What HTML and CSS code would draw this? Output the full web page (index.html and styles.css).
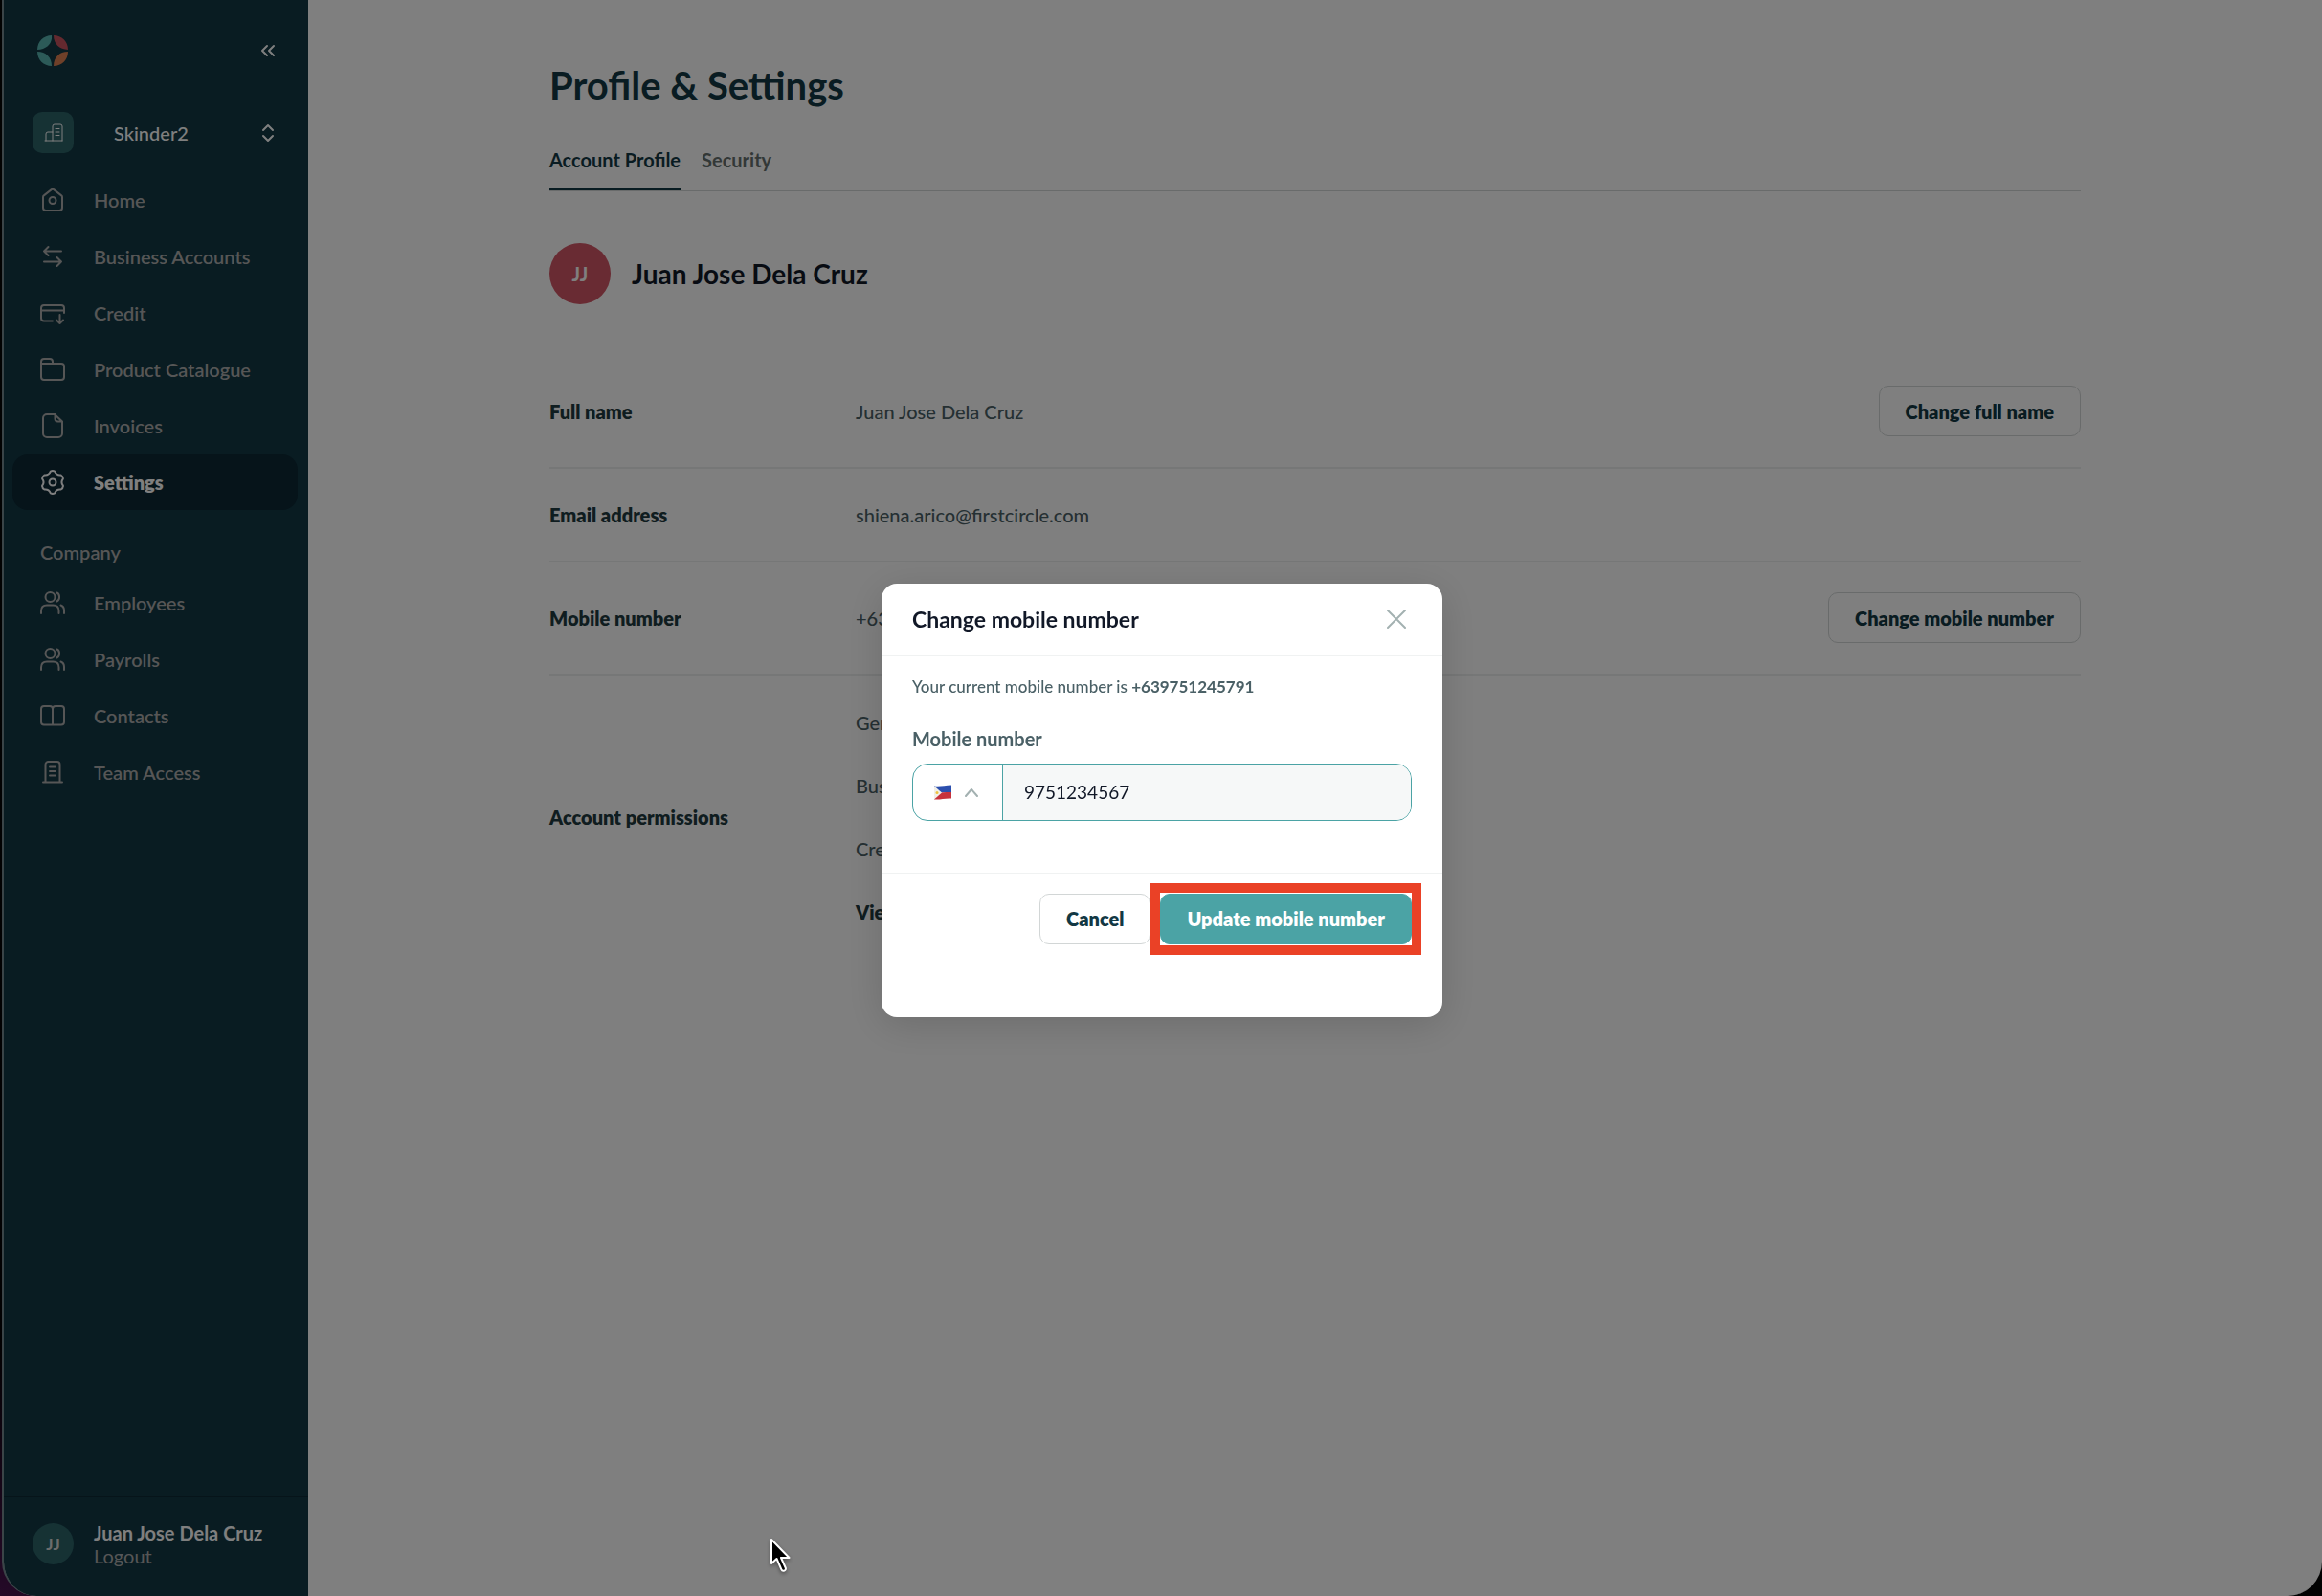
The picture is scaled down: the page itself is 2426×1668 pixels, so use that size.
FILE: index.html
```html
<!DOCTYPE html>
<html lang="en">
<head>
<meta charset="utf-8">
<meta name="viewport" content="width=device-width, initial-scale=1">
<title>Profile &amp; Settings</title>
<link rel="stylesheet" href="styles.css">
</head>
<body>
<svg class="sprite" aria-hidden="true">
  <symbol id="users" viewBox="0 0 28 28"><circle cx="11.500" cy="8" r="5"/><path d="M2 25v-2.500c0-4 2.500-6 6-6h6.500c3.500 0 6 2 6 6V25M18.500 3.500c3.400 1.500 3.400 7.500 0 9M22.500 16.500c2.300.8 3.500 2.800 3.500 5.500v3"/></symbol>
</svg>
<div class="app">
  <aside class="sidebar">
    <div class="brand">
      <svg class="logo" viewBox="0 0 32 32" aria-label="First Circle" role="img">
        <path fill="#58b5b1" d="M15 0v3.500C14 10 9 14.500 0 15 0 6.500 6.500 0 15 0z"/>
        <path fill="#c9525e" d="M17 0c8.500 0 15 6.500 15 15C23 14.500 17 9 17 0z"/>
        <path fill="#58b5b1" d="M0 17c9 0 15 6 15 15C6.500 32 0 25.500 0 17z"/>
        <path fill="#df8052" d="M32 17c0 8.500-6.500 15-15 15 0-9 6-15 15-15z"/>
      </svg>
      <button class="icon-button" aria-label="Collapse menu"><svg viewBox="0 0 16 16"><path d="M7 3 2 8l5 5M14 3 9 8l5 5"/></svg></button>
    </div>
    <button class="org">
      <span class="org-badge"><svg viewBox="0 0 20 20"><path d="M1 18h18M2 18v-7a2 2 0 0 1 2-2h5M9 18V3a2 2 0 0 1 2-2h6a2 2 0 0 1 2 2v15M12 5.500h4M12 9h4M12 12.500h4"/></svg></span>
      <span class="org-name">Skinder2</span>
      <svg class="org-arrows" viewBox="0 0 16 20"><path d="m3 7 5-5 5 5M3 13l5 5 5-5"/></svg>
    </button>
    <nav class="nav" aria-label="Main">
      <a href="#home"><svg viewBox="0 0 28 28"><path d="M4 11a2 2 0 0 1 .8-1.600l8-6.300a2 2 0 0 1 2.400 0l8 6.300a2 2 0 0 1 .8 1.600V22a3 3 0 0 1-3 3H7a3 3 0 0 1-3-3z"/><circle cx="14" cy="14.500" r="3.500"/></svg>Home</a>
      <a href="#accounts"><svg viewBox="0 0 28 28"><path d="M23 8.500H5M9.500 4 5 8.500 9.500 13M5 19.500h18M18.500 15l4.500 4.500-4.500 4.500"/></svg>Business Accounts</a>
      <a href="#credit"><svg viewBox="0 0 28 28"><path d="M14 22.500H5a3 3 0 0 1-3-3V9a3 3 0 0 1 3-3h18a3 3 0 0 1 3 3v5M2 11.500h24M21.500 16v9M18 21.500l3.500 3.500 3.500-3.500"/></svg>Credit</a>
      <a href="#catalogue"><svg viewBox="0 0 28 28"><path d="M2 22V6a3 3 0 0 1 3-3h6a3 3 0 0 1 3 3v2h9a3 3 0 0 1 3 3v11a3 3 0 0 1-3 3H5a3 3 0 0 1-3-3zM2 8h12"/></svg>Product Catalogue</a>
      <a href="#invoices"><svg viewBox="0 0 28 28"><path d="M16 2H8a4 4 0 0 0-4 4v16a4 4 0 0 0 4 4h12a4 4 0 0 0 4-4V9.500zM16.500 2v4.500a3 3 0 0 0 3 3H24"/></svg>Invoices</a>
      <a href="#settings" class="active" aria-current="page"><svg viewBox="-14 -14 28 28"><path d="M-2.200-11.300Q0-12.500 2.200-11.300 4-6.900 8.700-7.500 10.900-6.200 10.900-3.700 8 0 10.900 3.700 10.900 6.200 8.700 7.500 4 6.900 2.200 11.300 0 12.500-2.200 11.300-4 6.900-8.700 7.500-10.900 6.200-10.900 3.700-8 0-10.900-3.700-10.900-6.200-8.700-7.500-4-6.900-2.200-11.300z"/><circle r="3.500"/></svg>Settings</a>
    </nav>
    <h2 class="nav-title">Company</h2>
    <nav class="nav" aria-label="Company">
      <a href="#employees"><svg><use href="#users"/></svg>Employees</a>
      <a href="#payrolls"><svg><use href="#users"/></svg>Payrolls</a>
      <a href="#contacts"><svg viewBox="0 0 28 28"><path d="M14 7a3 3 0 0 0-3-3H5a3 3 0 0 0-3 3v13.500a3 3 0 0 0 3 3h18a3 3 0 0 0 3-3V7a3 3 0 0 0-3-3h-6a3 3 0 0 0-3 3zV23.500"/></svg>Contacts</a>
      <a href="#team"><svg viewBox="0 0 28 28"><path d="M4 24.500h20M6.500 24.500V6a3 3 0 0 1 3-3h9a3 3 0 0 1 3 3v18.500M11 8.500h6M11 13h6M11 17.500h6"/></svg>Team Access</a>
    </nav>
    <div class="user">
      <span class="user-avatar">JJ</span>
      <div><strong>Juan Jose Dela Cruz</strong><a href="#logout">Logout</a></div>
    </div>
  </aside>
  <main class="main">
    <div class="content">
      <h1>Profile &amp; Settings</h1>
      <nav class="tabs" aria-label="Settings sections">
        <a href="#profile" class="active" aria-current="page">Account Profile</a>
        <a href="#security">Security</a>
      </nav>
      <header class="profile">
        <span class="avatar">JJ</span>
        <h2>Juan Jose Dela Cruz</h2>
      </header>
      <dl class="rows">
        <div class="row thick"><dt>Full name</dt><dd><span>Juan Jose Dela Cruz</span><button class="button">Change full name</button></dd></div>
        <div class="row"><dt>Email address</dt><dd>shiena.arico@firstcircle.com</dd></div>
        <div class="row thick"><dt>Mobile number</dt><dd><span>+63</span><button class="button">Change mobile number</button></dd></div>
        <div class="row permissions"><dt>Account permissions</dt><dd><span>General</span><span>Business</span><span>Credit</span><a href="#permissions">View</a></dd></div>
      </dl>
    </div>
  </main>
</div>
<div class="overlay">
  <section class="modal" role="dialog" aria-modal="true" aria-labelledby="modal-title">
    <header class="modal-header">
      <h2 id="modal-title">Change mobile number</h2>
      <button class="close" aria-label="Close"><svg viewBox="0 0 20 20"><path d="m1 1 18 18M19 1 1 19"/></svg></button>
    </header>
    <form class="modal-form">
      <div class="modal-body">
        <p>Your current mobile number is <strong>+639751245791</strong></p>
        <label for="mobile">Mobile number</label>
        <div class="phone">
          <button type="button" class="country" aria-label="Country: Philippines" aria-haspopup="listbox">
            <svg class="flag" viewBox="0 0 18 16">
              <path fill="#2c4fae" d="M0 1.500c6 1 11-1 18-1V8c-6-.5-11 1-18 .5z"/>
              <path fill="#c8323c" d="M0 8.500C7 9 12 7.500 18 8v6.500c-7-.5-11 1.500-18 1z"/>
              <path fill="#f1efe8" d="M0 1.500l8 7-8 7z"/><circle cx="3" cy="8.500" r="1.500" fill="#eec341"/>
            </svg>
            <svg class="caret" viewBox="0 0 14 10"><path d="m1 9 6-7 6 7"/></svg>
          </button>
          <input id="mobile" type="tel" value="9751234567">
        </div>
      </div>
      <footer class="modal-footer">
        <button type="button" class="button">Cancel</button>
        <span class="highlight"><button type="button" class="button primary">Update mobile number</button></span>
      </footer>
    </form>
  </section>
</div>
<svg class="cursor" viewBox="0 0 24 38" aria-hidden="true"><path d="M2 2v25l5.500-5 4.800 11.200c1.300 3 5.600 1.200 4.400-1.700L12 21h8.500z"/></svg>
</body>
</html>
```
FILE: styles.css
```css
:root {
  --ink: #123844;
  --slate: #4a6066;
  --muted: #adadad;
  --teal: #4ba3a5;
  --line: #d2d6d6;
}

* { box-sizing: border-box; }

body {
  margin: 0;
  background: linear-gradient(to top right, #4a1450, #050305 8%, #020604);
  font: 400 20px/24px Lato, "Liberation Sans", sans-serif;
  color: var(--slate);
}

h1, h2, p, dl, dd { margin: 0; }
a { color: inherit; text-decoration: none; }
button { margin: 0; padding: 0; border: 0; background: none; color: inherit; font: inherit; cursor: pointer; }
svg { flex: none; fill: none; stroke: currentColor; stroke-width: 2; stroke-linecap: round; stroke-linejoin: round; }
.sprite { position: absolute; width: 0; height: 0; }

.app {
  display: flex;
  min-height: 100vh;
  margin: 0 0 0 2px;
  border-left: 2px solid #75898f;
  border-right: 2px solid #fff;
  border-radius: 0 0 36px 36px;
  background: #fff;
  overflow: hidden;
}

/* Sidebar */
.sidebar {
  display: flex;
  flex: none;
  flex-direction: column;
  width: 318px;
  background: var(--ink);
  color: var(--muted);
}
.brand { display: flex; align-items: center; justify-content: space-between; padding: 37px 34px 0 35px; }
.logo { width: 32px; height: 32px; stroke: none; }
.icon-button { display: flex; color: #fff; }
.icon-button svg { width: 16px; height: 16px; }
.org { display: flex; align-items: center; margin: 48px 34px 0 30px; color: #fff; text-align: left; }
.org-badge { display: flex; align-items: center; justify-content: center; width: 43px; height: 43px; border-radius: 10px; background: #2c6469; }
.org-badge svg { width: 20px; height: 20px; stroke-width: 1; }
.org-name { flex: 1; padding-left: 42px; font-weight: 500; }
.org-arrows { width: 16px; height: 20px; }
.nav { display: flex; flex-direction: column; gap: 1px; padding: 0 11px 0 9px; }
.org + .nav { margin-top: 20px; }
.nav a { display: flex; align-items: center; gap: 29px; height: 58px; padding-left: 28px; border-radius: 16px; font-weight: 600; }
.nav svg { width: 28px; height: 28px; }
.nav .active { background: #0c2834; color: #fff; font-weight: 800; }
.nav-title { margin: 32px 0 12px 38px; font-size: 20px; font-weight: 600; }
.user { display: flex; align-items: center; gap: 21px; height: 104px; margin-top: auto; padding: 0 30px 6px; border-top: 1px solid #0c2834; }
.user-avatar { display: flex; align-items: center; justify-content: center; width: 43px; height: 43px; border-radius: 50%; background: #2c6469; color: #d8d8d8; font-size: 17px; font-weight: 700; }
.user strong { display: block; color: #fff; }

/* Page */
.main { flex: 1; padding: 65px 32px 32px 34px; }
.content { max-width: 1600px; margin: 0 auto; }
h1 { color: var(--ink); font-size: 40px; font-weight: 700; line-height: 48px; }
.tabs { display: flex; gap: 22px; margin-top: 42px; border-bottom: 1px solid var(--line); font-weight: 700; }
.tabs a { padding-bottom: 18px; border-bottom: 2px solid transparent; color: #67716f; }
.tabs .active { border-color: var(--ink); color: var(--ink); }
.profile { display: flex; align-items: center; gap: 22px; margin-top: 54px; }
.profile h2 { color: #111827; font-size: 28px; font-weight: 700; line-height: 36px; }
.avatar { display: flex; align-items: center; justify-content: center; width: 64px; height: 64px; border-radius: 50%; background: #d25766; color: #fff; font-weight: 700; }
.rows { margin-top: 53px; line-height: 32px; }
.row { display: flex; align-items: center; padding: 32px 0; border-bottom: 1px solid #eceeee; }
.row.thick { border-bottom-width: 2px; }
.row dt { flex: none; width: 320px; color: #1f3a40; font-weight: 800; }
.row dd { display: flex; flex: 1; align-items: center; justify-content: space-between; font-weight: 500; }
.row.permissions { padding: 16px 0; border: 0; }
.permissions dd { flex-direction: column; align-items: flex-start; line-height: 66px; }
.permissions a { color: #1f3a40; font-weight: 800; }

.button { height: 53px; padding: 0 27px; border: 1px solid var(--line); border-radius: 10px; background: #fff; color: var(--ink); font-size: 20px; font-weight: 800; line-height: 24px; }

/* Dialog */
.overlay { position: fixed; inset: 0; display: flex; align-items: center; justify-content: center; padding: 4px 0 0 2px; background: rgba(0, 0, 0, .5); }
.modal { width: 586px; padding-bottom: 76px; border-radius: 16px; background: #fff; box-shadow: 0 8px 40px rgba(0, 0, 0, .15); }
.modal-header { display: flex; align-items: center; justify-content: space-between; height: 76px; padding: 0 38px 0 32px; border-bottom: 1px solid #f0f2f2; }
.modal-header h2 { color: #111827; font-size: 23px; font-weight: 700; }
.close { display: flex; color: #a3b1b1; }
.close svg { width: 20px; height: 20px; }
.modal-body { padding: 20px 32px 54px; }
.modal-body p { font-size: 17px; font-weight: 500; }
.modal-body label { display: block; margin: 30px 0 14px; font-weight: 700; }
.phone { display: flex; height: 60px; border: 1px solid var(--teal); border-radius: 16px; overflow: hidden; }
.country { display: flex; align-items: center; gap: 14px; width: 94px; padding-left: 22px; border-right: 1px solid var(--teal); color: #a3b1b1; }
.flag { width: 18px; height: 16px; stroke: none; }
.caret { width: 14px; height: 10px; }
.phone input { flex: 1; min-width: 0; padding: 0 22px; border: 0; outline: 0; background: #f6f8f8; color: #111827; font: inherit; font-size: 19px; }
.modal-footer { display: flex; justify-content: flex-end; gap: 10px; padding: 21px 32px 0; border-top: 1px solid #f0f2f2; }
.highlight { position: relative; }
.highlight::after { content: ""; position: absolute; inset: -11px -10px; border: 10px solid #ea4126; pointer-events: none; }
.primary { border-color: var(--teal); background: var(--teal); color: #fff; }

.cursor { position: fixed; top: 1607px; left: 804px; width: 24px; height: 38px; fill: #000; stroke: #fff; filter: drop-shadow(0 2px 2px rgba(0, 0, 0, .4)); pointer-events: none; }
```
